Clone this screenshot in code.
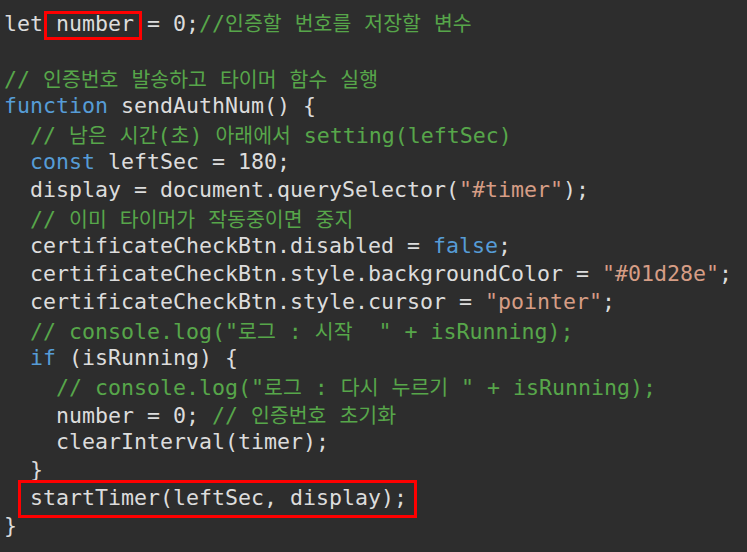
import React from "react";

// colours of the editor theme
const P = "text-[#dcdcdc]";
const K = "text-[#569cd6]";
const C = "text-[#57a64a]";
const S = "text-[#d69d85]";

type Tok = [string, string];

// Korean runs are drawn in a CJK face at their own size so they keep the reference width
function renderText(text: string) {
  const parts = text.split(/([\u3131-\u318E\uAC00-\uD7A3]+)/);
  return parts.map((part, i) =>
    /[\u3131-\u318E\uAC00-\uD7A3]/.test(part) ? (
      <span
        key={i}
        className="text-[20.5px] font-['Noto_Sans_CJK_KR',sans-serif]"
      >
        {part}
      </span>
    ) : (
      <React.Fragment key={i}>{part}</React.Fragment>
    )
  );
}

function Line({ tokens }: { tokens: Tok[] }) {
  return (
    <div className="h-[28px] whitespace-pre">
      {tokens.map(([color, text], i) => (
        <span key={i} className={color}>
          {renderText(text)}
        </span>
      ))}
      {tokens.length === 0 && " "}
    </div>
  );
}

const lines: Tok[][] = [
  [],
  [[C, "// 인증번호 발송하고 타이머 함수 실행"]],
  [
    [K, "function"],
    [P, " sendAuthNum() {"],
  ],
  [[C, "  // 남은 시간(초) 아래에서 setting(leftSec)"]],
  [
    [P, "  "],
    [K, "const"],
    [P, " leftSec = 180;"],
  ],
  [
    [P, "  display = document.querySelector("],
    [S, '"#timer"'],
    [P, ");"],
  ],
  [[C, "  // 이미 타이머가 작동중이면 중지"]],
  [
    [P, "  certificateCheckBtn.disabled = "],
    [K, "false"],
    [P, ";"],
  ],
  [
    [P, "  certificateCheckBtn.style.backgroundColor = "],
    [S, '"#01d28e"'],
    [P, ";"],
  ],
  [
    [P, "  certificateCheckBtn.style.cursor = "],
    [S, '"pointer"'],
    [P, ";"],
  ],
  [[C, '  // console.log("로그 : 시작  " + isRunning);']],
  [
    [P, "  "],
    [K, "if"],
    [P, " (isRunning) {"],
  ],
  [[C, '    // console.log("로그 : 다시 누르기 " + isRunning);']],
  [
    [P, "    number = 0; "],
    [C, "// 인증번호 초기화"],
  ],
  [[P, "    clearInterval(timer);"]],
  [[P, "  }"]],
];

export default function App() {
  return (
    <div className="w-[747px] h-[552px] overflow-hidden bg-[#2d2d2d] pt-[8px] pl-[4px] font-['DejaVu_Sans_Mono',monospace] text-[21.6px] leading-[28px] text-[#dcdcdc]">
      {/* first line with the highlighted variable */}
      <div className="h-[28px] whitespace-pre">
        <span className={P}>let </span>
        <span className={`relative inline-block h-[28px] ${P}`}>
          number
          <span className="absolute -left-[12px] -right-[8px] top-[1px] -bottom-[2px] border-[3px] border-[#ff0000]" />
        </span>
        <span className={P}> = 0;</span>
        <span className={C}>{renderText("//인증할 번호를 저장할 변수")}</span>
      </div>

      {lines.map((tokens, i) => (
        <Line key={i} tokens={tokens} />
      ))}

      {/* highlighted call */}
      <div className="h-[28px] whitespace-pre">
        <span className={P}>{"  "}</span>
        <span className={`relative inline-block h-[28px] ${P}`}>
          startTimer(leftSec, display);
          <span className="absolute -left-[12px] -right-[10px] -top-[4px] -bottom-[6px] border-[3px] border-[#ff0000]" />
        </span>
      </div>
      <Line tokens={[[P, "}"]]} />
    </div>
  );
}
